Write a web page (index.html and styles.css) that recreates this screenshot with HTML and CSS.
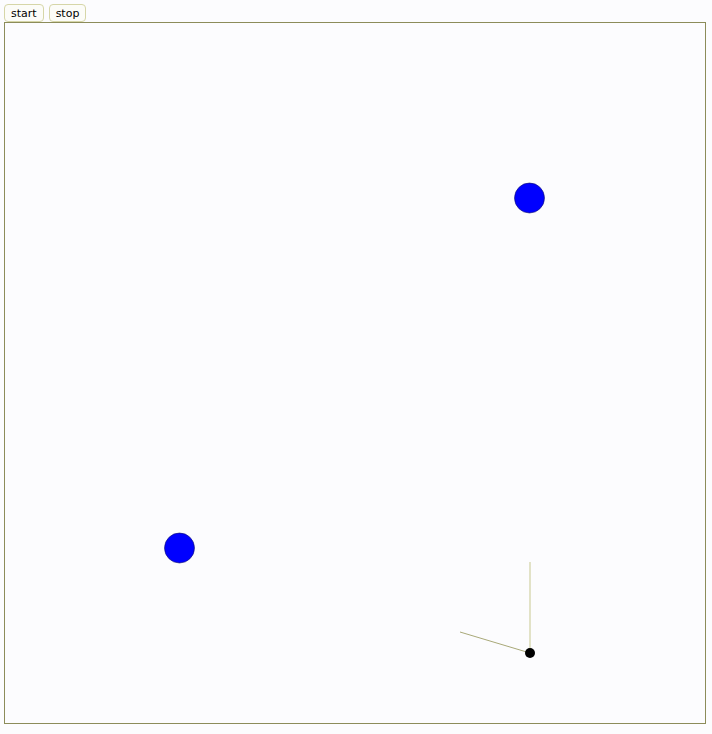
FILE: index.html
```html
<!DOCTYPE html>
<html>
<head>
<meta charset="utf-8">
<link rel="stylesheet" href="styles.css">
</head>
<body>
<div class="toolbar">
  <button class="btn">start</button>
  <button class="btn">stop</button>
</div>
<div class="stage">
  <svg class="scene" width="700" height="700" viewBox="0 0 700 700">
    <circle cx="524.5" cy="175" r="15" fill="#0000ff" stroke="#10106a" stroke-width="0.6"/>
    <circle cx="174.5" cy="525" r="15" fill="#0000ff" stroke="#10106a" stroke-width="0.6"/>
    <line x1="525" y1="630" x2="525" y2="539" stroke="#c8c890" stroke-width="1"/>
    <line x1="525" y1="630" x2="455" y2="609" stroke="#a8a878" stroke-width="1"/>
    <circle cx="525" cy="630" r="5" fill="#000"/>
  </svg>
</div>
</body>
</html>
```
FILE: styles.css
```css
html, body {
  margin: 0;
  padding: 0;
  background: #fcfcfe;
}
body {
  padding: 4px;
  font-family: "DejaVu Sans", "Liberation Sans", sans-serif;
}
.toolbar {
  display: flex;
  gap: 5px;
  height: 18px;
}
.btn {
  height: 18px;
  padding: 1px 6px 0;
  margin: 0;
  font-family: "DejaVu Sans", sans-serif;
  font-size: 11px;
  line-height: 16px;
  color: #000;
  background: #fcfcf8;
  border: 1px solid #d6d6a8;
  border-radius: 4px;
}
.stage {
  width: 700px;
  height: 700px;
  border: 1px solid #8c8c5a;
}
.scene {
  display: block;
}
```
